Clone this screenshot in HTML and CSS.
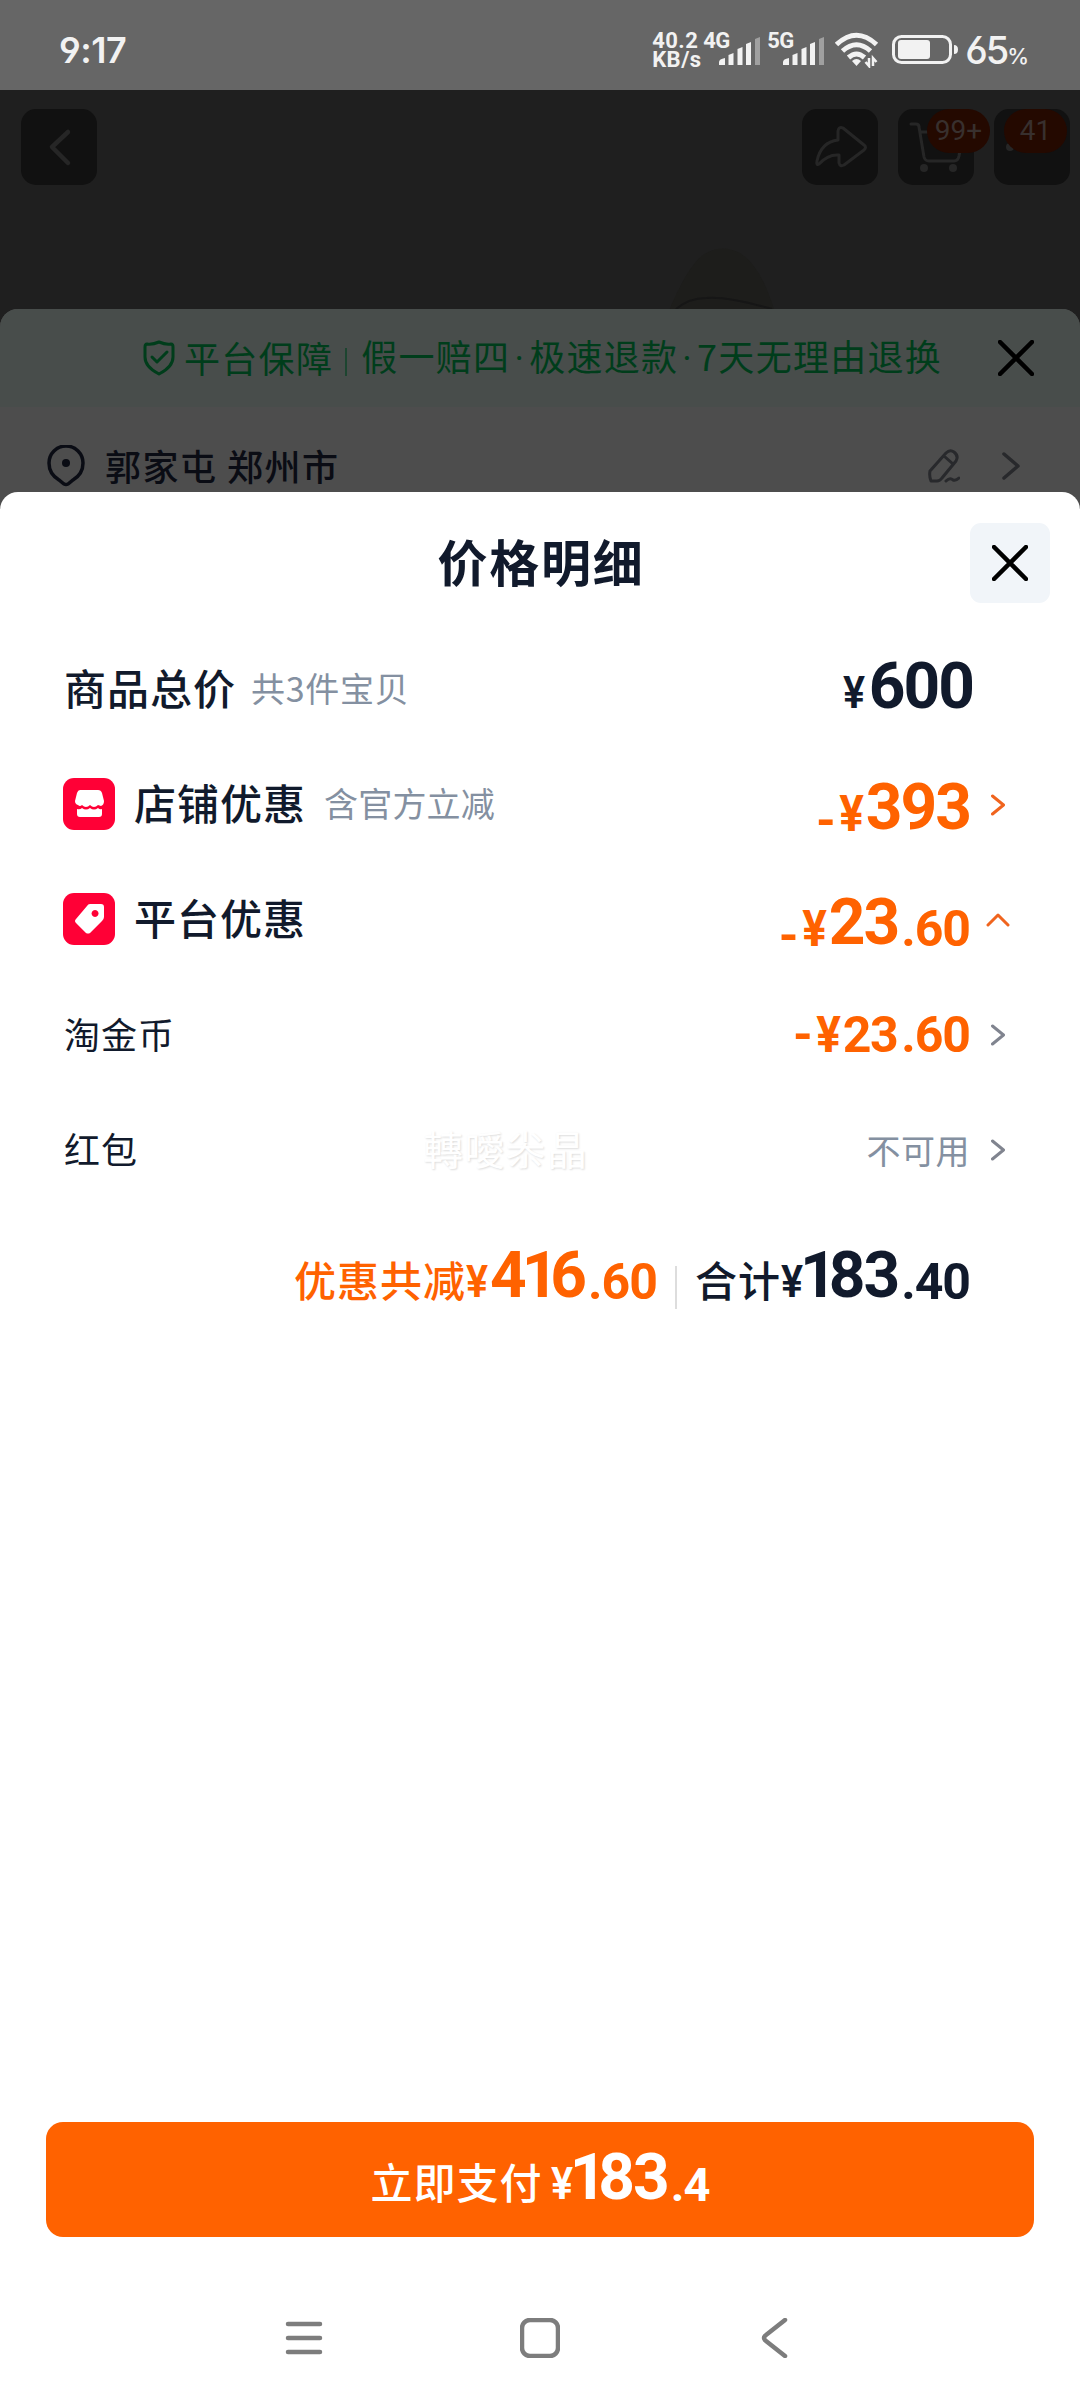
FILE: index.html
```html
<!DOCTYPE html>
<html lang="zh-CN">
<head>
<meta charset="utf-8">
<title>价格明细</title>
<link rel="stylesheet" href="styles.css">
</head>
<body>
<div class="screen">
  <header class="status">
    <span class="clock">9:17</span>
    <div class="status-right">
      <div class="speed"><span>40.2</span><span>KB/s</span></div>
      <div class="net"><span class="net-label">4G</span>
        <svg class="bars" width="42" height="28" viewBox="0 0 42 28"><g fill="#f2f2f2"><path d="M0 28v-3q0-3 6-4v7zM9.500 28V18l5-2v12zM18.500 28V12l5-2v18zM27 28V7l5-2v23z"/><path fill="#a0a0a0" d="M36 28V2l5-2v28z"/></g></svg>
      </div>
      <div class="net net-5g"><span class="net-label">5G</span>
        <svg class="bars" width="42" height="28" viewBox="0 0 42 28"><g fill="#f2f2f2"><path d="M0 28v-3q0-3 6-4v7zM9.500 28V18l5-2v12zM18.500 28V12l5-2v18zM27 28V7l5-2v23z"/><path fill="#a0a0a0" d="M36 28V2l5-2v28z"/></g></svg>
      </div>
      <svg class="wifi" width="44" height="36" viewBox="0 0 44 36" fill="none" stroke="#f2f2f2" stroke-width="5"><path d="M1.500 12.500Q21.500-6 41.500 12.500M7.500 19q14-12.500 28 0M13.500 25.500q8-7 16 0"/><path d="M17 29q4.500-4 9 0l-4.500 5z" fill="#f2f2f2" stroke="none"/><path d="M34 26v8l-3.500-4M38 34v-8l3.500 4" stroke-width="2.500"/></svg>
      <svg class="battery" width="68" height="30" viewBox="0 0 68 30"><rect x="1.500" y="1.500" width="57" height="26" rx="8" fill="none" stroke="#f2f2f2" stroke-width="3"/><rect x="6" y="5" width="32" height="19" rx="3" fill="#f2f2f2"/><path d="M62 10q4 0 4 4.500T62 19z" fill="#f2f2f2"/></svg>
      <span class="percent">65<small>%</small></span>
    </div>
  </header>

  <section class="product">
    <div class="tool"><svg width="76" height="76" viewBox="0 0 76 76"><path d="M47 23 31 38l16 16" class="dim thick"/></svg></div>
    <div class="tools">
      <div class="tool"><svg width="76" height="76" viewBox="0 0 76 76"><path class="dim" d="M36 31v-9q1-5 5-3l21 17q3 2 0 5L42 56q-4 2-5-2v-8q-11-1-20 9-3 2-2-3 4-19 21-21z"/></svg></div>
      <div class="tool"><svg width="76" height="76" viewBox="0 0 76 76"><path class="dim" d="M13 15h5q3 0 3 3l5 30q1 4 5 4h25q4 0 5-5l4-24H23"/><g fill="#262626"><circle cx="26" cy="59" r="4"/><circle cx="55" cy="59" r="4"/></g></svg><span class="badge">99+</span></div>
      <div class="tool"><svg width="76" height="76" viewBox="0 0 76 76"><g fill="#262626"><circle cx="16" cy="38" r="4"/><circle cx="38" cy="40" r="4"/></g></svg><span class="badge badge-more">41</span></div>
    </div>
    <svg class="hat" width="130" height="70" viewBox="0 0 130 70"><path d="M5 70Q24 24 40 12q17-12 37-2 20 12 34 56l14 4z" fill="#1d1d1b"/><path d="M13 66q13-11 30-11 20-2 66 11" fill="none" stroke="#161616" stroke-width="2"/></svg>
  </section>

  <section class="order">
    <div class="guarantee">
      <svg class="shield" width="32" height="36" viewBox="0 0 32 36"><path d="M16 2q7 3 12 2 2 0 2 3v10q0 10-14 17Q2 27 2 17V7q0-3 2-3 5 1 12-2zM9 17l5 5 10-10"/></svg>
      <span class="g-title">平台保障</span><i class="g-rule"></i><span class="g-text">假一赔四<span class="dot">·</span>极速退款<span class="dot">·</span>7天无理由退换</span>
      <svg class="close" width="36" height="36" viewBox="0 0 36 36"><path d="M2 2l32 32M34 2 2 34"/></svg>
    </div>
    <div class="address">
      <svg class="pin" width="38" height="42" viewBox="0 0 38 42"><path d="M12 35Q2 29 2 18a17 17 0 0 1 34 0q0 11-10 17l-5 4q-2 1-4 0z" fill="none" stroke="#0a0c14" stroke-width="3.500"/><circle cx="19" cy="18" r="4" fill="#0a0c14"/></svg>
      <span class="addr-text">郭家屯 郑州市</span>
      <svg class="edit" width="32" height="34" viewBox="0 0 32 34"><path d="M2 22 18 4q4-4 8-1 5 4 2 9L14 29q-2 3-5 3H3q-2-5-1-10zM16 7l9 8M18 32q4-4 7-1 3 1 6-2"/></svg>
      <svg class="addr-arrow" width="18" height="28" viewBox="0 0 18 28"><path d="M2 2l14 12L2 26"/></svg>
    </div>
  </section>

  <main class="sheet">
    <div class="sheet-head"><h1>价格明细</h1><div class="sheet-close"><svg class="close" width="36" height="36" viewBox="0 0 36 36"><path d="M2 2l32 32M34 2 2 34"/></svg></div></div>
    <div class="rows">
      <div class="row"><span class="label">商品总价</span><span class="note note-near">共3件宝贝</span>
        <span class="amount total"><span class="yen yen-s">¥</span><b>600</b></span><span class="arrow"></span></div>
      <div class="row"><svg class="icon" width="52" height="52" viewBox="0 0 52 52"><rect width="52" height="52" rx="11" fill="#ff0036"/><path fill="#fff" d="M17 12h18q3 0 4 3l2 8q0 4-3 5l-3-1q-2 2-4 2t-4-2q-2 2-4 2t-4-2q-2 2-4 0-3-1-3-4l2-8q1-3 3-3zM14 31q3 1 5-1 4 3 8 0 4 3 8 0 2 2 4 1v5q0 3-3 3H17q-3 0-3-3z"/></svg><span class="label">店铺优惠</span><span class="note">含官方立减</span>
        <span class="amount low"><span class="minus">-</span><span class="yen">¥</span><b>393</b></span><span class="arrow orange"><svg width="14" height="22" viewBox="0 0 14 22"><path d="M1.500 2l11 9-11 9"/></svg></span></div>
      <div class="row"><svg class="icon" width="52" height="52" viewBox="0 0 52 52"><rect width="52" height="52" rx="11" fill="#ff0036"/><path fill="#fff" fill-rule="evenodd" d="M27 11h11q3 0 3 3v10q0 2-2 4L27 40q-2 1-4 0L13 30q-2-2 0-4l11-13q1-2 3-2zm5 6a3.500 3.500 0 1 0 .1 0z"/></svg><span class="label">平台优惠</span>
        <span class="amount low"><span class="minus">-</span><span class="yen">¥</span><b>23</b><span class="cents">.60</span></span><span class="arrow orange up"><svg width="24" height="14" viewBox="0 0 24 14"><path d="M2 12 12 2l10 10"/></svg></span></div>
      <div class="row"><span class="sub">淘金币</span>
        <span class="amount flat"><span class="minus">-</span><span class="yen">¥</span><span class="whole">23</span><span class="cents">.60</span></span><span class="arrow"><svg width="14" height="22" viewBox="0 0 14 22"><path d="M1.500 2l11 9-11 9"/></svg></span></div>
      <div class="row"><span class="sub">红包</span><span class="watermark">轉噯尜晶</span>
        <span class="unavailable">不可用</span><span class="arrow"><svg width="14" height="22" viewBox="0 0 14 22"><path d="M1.500 2l11 9-11 9"/></svg></span></div>
    </div>
    <div class="summary">
      <span class="saved"><span class="cn">优惠共减</span><span class="yen yen-s">¥</span><b><span class="before-one">4</span><span class="one">1</span>6</b><span class="cents">.60</span></span><i></i>
      <span class="due"><span class="cn">合计</span><span class="yen yen-s">¥</span><b><span class="one first">1</span>83</b><span class="cents">.40</span></span>
    </div>
    <div class="pay"><span class="cn">立即支付</span><span class="yen yen-s">¥</span><b><span class="one first">1</span>83</b><span class="cents">.4</span></div>
    <nav class="nav">
      <svg width="40" height="40" viewBox="0 0 40 40"><path d="M4 6h32M4 20h32M4 34h32"/></svg>
      <svg width="40" height="40" viewBox="0 0 40 40"><rect x="2" y="2" width="36" height="36" rx="8"/></svg>
      <svg width="40" height="40" viewBox="0 0 40 40"><path d="M29 2 10 17q-4 3 0 6l19 15"/></svg>
    </nav>
  </main>
</div>
</body>
</html>
```
FILE: styles.css
```css
* { box-sizing: border-box; }
body { margin: 0; background: #fff; font-family: "Noto Sans CJK SC", sans-serif; }
.screen { width: 1080px; height: 2400px; overflow: hidden; display: flex; flex-direction: column; background: #1f1f1f; }
svg { display: block; flex: none; }
span { white-space: nowrap; }

.status { height: 90px; flex: none; background: #666; color: #f2f2f2; display: flex; justify-content: space-between; align-items: center; padding: 10px 53px 0 59px; font-family: Inter, sans-serif; font-feature-settings: "cv03", "cv04"; }
.clock { font-size: 36px; font-weight: 600; letter-spacing: -0.5px; }
.status-right { display: flex; align-items: center; }
.speed { display: flex; flex-direction: column; font: 700 22px/19px Roboto, sans-serif; letter-spacing: 0.5px; width: 51px; }
.net { display: flex; width: 64px; height: 36px; position: relative; }
.net-label { font: 700 22px/18px Roboto, sans-serif; letter-spacing: -0.5px; }
.bars { position: absolute; left: 16px; top: 5px; }
.wifi { margin-left: 4px; }
.battery { margin-left: 13px; }
.percent { margin-left: 5px; font-size: 38px; font-weight: 500; letter-spacing: -2px; }
.percent small { font-size: 22px; }

.product { height: 219px; flex: none; display: flex; justify-content: space-between; padding: 19px 10px 0 21px; position: relative; }
.tools { display: flex; gap: 20px; }
.tool { position: relative; width: 76px; height: 76px; border-radius: 15px; background: #111; }
.dim { fill: none; stroke: #262626; stroke-width: 3; stroke-linejoin: round; stroke-linecap: round; }
.thick { stroke-width: 4.500; }
.badge { position: absolute; left: 29px; top: 0; width: 63px; height: 44px; border-radius: 22px; background: #240900; color: #38302e; font: 400 28px/44px Roboto, sans-serif; text-align: center; }
.badge-more { left: 10px; }
.hat { position: absolute; left: 663px; top: 153px; }

.order { height: 203px; margin-bottom: -20px; flex: none; background: #4d4d4d; border-radius: 18px 18px 0 0; overflow: hidden; position: relative; }
.guarantee { height: 98px; background: #484d4b; display: flex; align-items: center; padding-left: 143px; color: #003d1b; font-size: 36px; letter-spacing: 1.3px; }
.guarantee span { line-height: 50px; padding-bottom: 2px; }
.guarantee .dot { font-family: Roboto, sans-serif; margin: 0 4px; padding: 0; }
.shield { fill: none; stroke: #003d1b; stroke-width: 3; stroke-linejoin: round; stroke-linecap: round; margin-right: 9px; }
.g-rule { width: 2px; height: 28px; background: #1d4530; margin: 8px 14px 0 12px; }
.close { fill: none; stroke: #000; stroke-width: 4.500; stroke-linecap: round; }
.guarantee .close { margin-left: auto; margin-right: 46px; }
.address { height: 85px; display: flex; align-items: center; padding: 32px 60px 0 47px; color: #0a0c14; font-size: 36px; font-weight: 500; }
.addr-text { margin-left: 20px; letter-spacing: 1.5px; padding-bottom: 2px; }
.edit { margin-left: auto; fill: none; stroke: #28292c; stroke-width: 3; stroke-linejoin: round; stroke-linecap: round; }
.addr-arrow { margin-left: 42px; fill: none; stroke: #28292c; stroke-width: 3.500; stroke-linejoin: round; stroke-linecap: round; }

.sheet { flex: 1; background: #fff; border-radius: 18px 18px 0 0; display: flex; flex-direction: column; position: relative; }
.sheet-head { height: 140px; flex: none; position: relative; display: flex; align-items: center; justify-content: center; }
h1 { margin: 0; padding: 0 0 4px 2px; font-size: 50px; font-weight: 700; line-height: 70px; letter-spacing: 1.7px; color: #111a2c; }
.sheet-close { position: absolute; right: 30px; top: 31px; width: 80px; height: 80px; border-radius: 11px; background: #f1f5f9; display: grid; place-items: center; }
.rows { padding: 0 64px; }
.row { height: 115px; display: flex; align-items: center; position: relative; }
.label { font-size: 42px; font-weight: 500; letter-spacing: 1px; color: #111a2c; padding-bottom: 7px; }
.icon { margin: 0 19px 1px -1px; }
.note { margin-left: 18px; font-size: 34px; letter-spacing: 0.2px; color: #8490a1; padding-bottom: 4px; }
.note-near { margin-left: 15px; letter-spacing: 0.7px; }
.sub { font-size: 36px; color: #111a2c; letter-spacing: 1px; padding-bottom: 4px; }
.amount, .summary, .pay { font-family: Roboto, sans-serif; font-weight: 700; font-size: 50px; line-height: 1; }
.amount { margin-left: auto; color: #ff6200; display: flex; align-items: baseline; }
.amount b, .summary b, .pay b { font-size: 64px; font-weight: 700; letter-spacing: -2px; margin-right: 3px; }
.low { padding-top: 6px; }
.low .minus { position: relative; top: 9px; }
.low .yen { position: relative; top: 2px; }
.low b:last-child { margin-right: 0; }
.whole { margin-right: 4px; letter-spacing: -1.5px; }
.total { color: #111a2c; padding-bottom: 5px; }
.total .yen { margin-right: 4px; }
.amount.total b { margin-right: -3px; }
.minus { width: 16px; margin-right: 5px; display: flex; justify-content: center; }
.yen { width: 25px; margin-right: 2px; display: flex; justify-content: center; transform: scaleX(0.92); }
.yen-s { width: 22px; font-size: 45px; font-weight: 600; }
.cents { letter-spacing: -1px; position: relative; top: 2px; }
.flat .cents { top: 0; }
.before-one { letter-spacing: -5px; }
.one { letter-spacing: -8px; }
.first { margin-left: -5px; }
.arrow { width: 46px; display: flex; justify-content: center; padding-left: 10px; }
.arrow svg { fill: none; stroke: #80848f; stroke-width: 3; stroke-linecap: round; stroke-linejoin: round; }
.orange svg { stroke: #f0641e; }
.watermark { position: absolute; left: 359px; padding-bottom: 4px; font-size: 40px; letter-spacing: 1.3px; color: #fff; text-shadow: 1px 1px 2px #ddd; }
.unavailable { margin-left: auto; font-size: 34px; letter-spacing: 0.5px; color: #8490a1; }
.summary { display: flex; align-items: baseline; justify-content: flex-end; padding-right: 110px; margin-top: 37px; color: #111a2c; }
.summary > span { display: flex; align-items: baseline; }
.saved { color: #ff6200; }
.cn { font-family: "Noto Sans CJK SC", sans-serif; font-size: 42px; font-weight: 500; letter-spacing: 1px; }
.summary i { width: 2px; height: 43px; background: #ddd; margin: 0 18px; align-self: center; position: relative; top: 11px; }
.pay { margin: auto 46px 0; height: 115px; flex: none; background: #ff6200; border-radius: 17px; color: #fff; display: flex; justify-content: center; align-items: baseline; padding-top: 24px; }
.pay .cn { margin-right: 8px; }
.pay .cents { font-size: 47px; }
.nav { height: 163px; flex: none; display: flex; justify-content: center; gap: 196px; padding-top: 81px; }
.nav svg { fill: none; stroke: #7d7d7d; stroke-width: 4.500; stroke-linecap: round; }
```
